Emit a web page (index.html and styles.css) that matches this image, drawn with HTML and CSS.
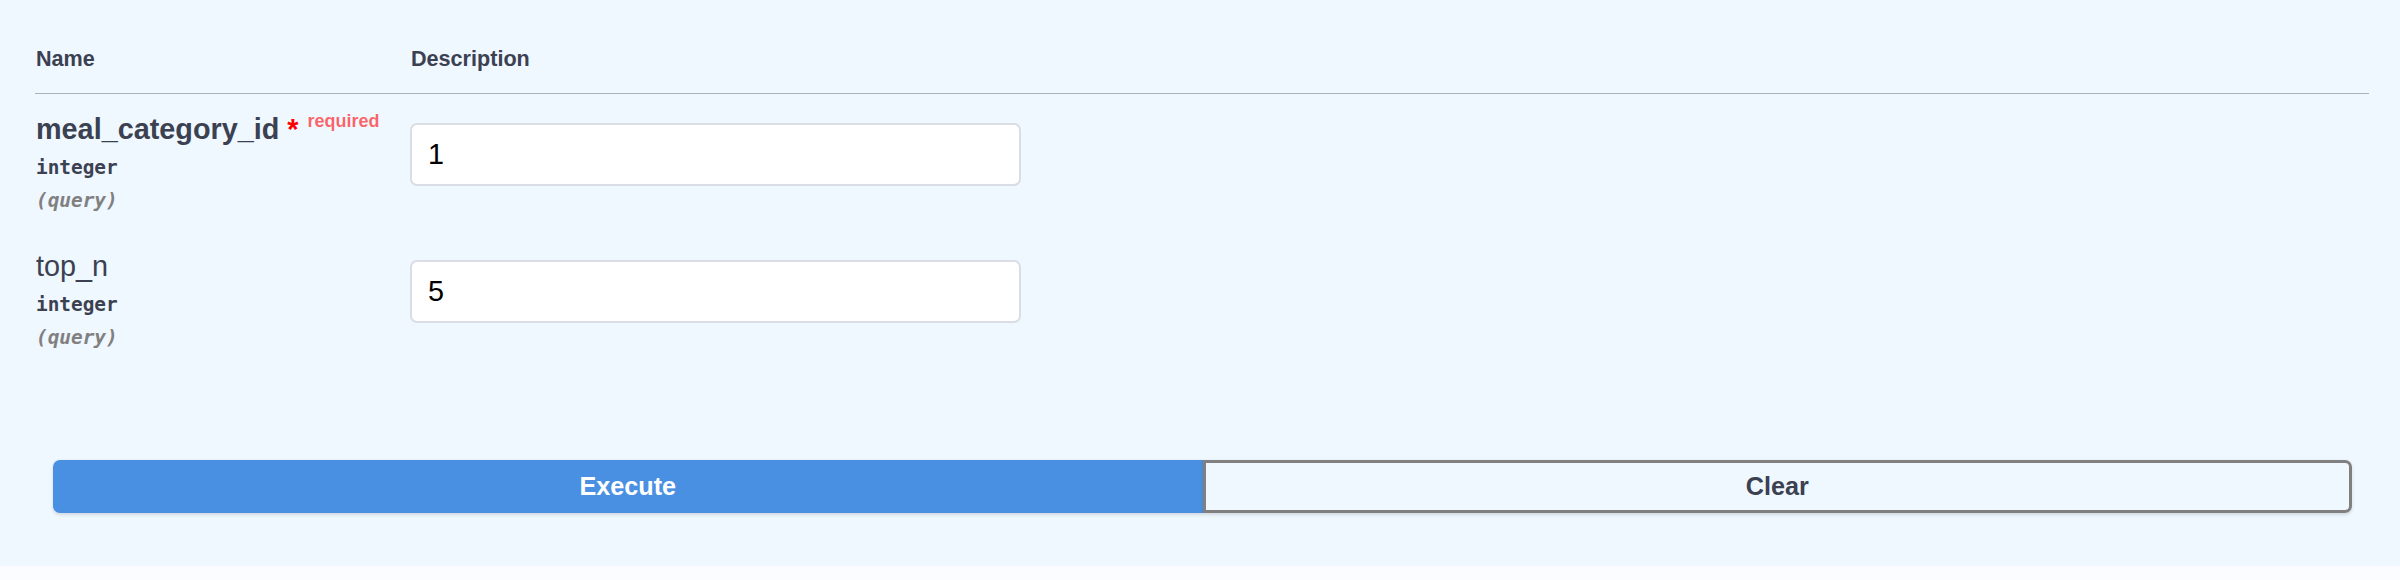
FILE: index.html
```html
<!DOCTYPE html>
<html lang="en">
<head>
<meta charset="utf-8">
<title>Parameters</title>
<link rel="stylesheet" href="styles.css">
</head>
<body>
<div class="opblock">
  <div class="params">
    <div class="thead">
      <div class="col-name">Name</div>
      <div class="col-desc">Description</div>
    </div>
    <div class="row">
      <div class="col-name">
        <div class="param-name required">meal_category_id<span class="star">&nbsp;*</span><span class="req">required</span></div>
        <div class="param-type">integer</div>
        <div class="param-in">(query)</div>
      </div>
      <div class="col-desc">
        <input class="param-input" type="text" value="1">
      </div>
    </div>
    <div class="row">
      <div class="col-name">
        <div class="param-name">top_n</div>
        <div class="param-type">integer</div>
        <div class="param-in">(query)</div>
      </div>
      <div class="col-desc">
        <input class="param-input" type="text" value="5">
      </div>
    </div>
  </div>
  <div class="btn-group">
    <button class="btn execute" type="button">Execute</button>
    <button class="btn clear" type="button">Clear</button>
  </div>
</div>
</body>
</html>
```

FILE: styles.css
```css
html, body {
  margin: 0;
  padding: 0;
}
body {
  background: #fafcff;
  font-family: "Liberation Sans", Arial, sans-serif;
  color: #3b4151;
}
.opblock {
  background: #eff7ff;
  height: 566px;
  box-sizing: border-box;
  padding-top: 45.5px;
}
.params {
  margin: 0 31px 0 35px;
}
.thead {
  display: grid;
  grid-template-columns: 375px 1fr;
  font-size: 21.6px;
  font-weight: 700;
  line-height: 26px;
  padding: 0 0 21.5px 1px;
  border-bottom: 1px solid #aab2be;
}
.row {
  display: grid;
  grid-template-columns: 375px 1fr;
  padding: 18px 0 18.2px 1px;
}
.param-name {
  font-size: 28.8px;
  line-height: 34px;
  font-weight: 400;
  white-space: nowrap;
}
.param-name.required {
  font-weight: 700;
}
.star {
  color: #ff0000;
}
.req {
  font-size: 18px;
  line-height: 0;
  color: rgba(255, 0, 0, 0.6);
  padding-left: 9px;
  vertical-align: 11.7px;
}
.param-type {
  font-family: "DejaVu Sans Mono", "Liberation Mono", monospace;
  font-weight: 700;
  font-size: 19.4px;
  line-height: 24px;
  padding: 9.8px 0 9px;
}
.param-in {
  font-family: "DejaVu Sans Mono", "Liberation Mono", monospace;
  font-weight: 700;
  font-style: italic;
  font-size: 19.4px;
  line-height: 24px;
  color: #808080;
}
.col-desc {
  min-width: 0;
}
.param-input {
  display: block;
  box-sizing: border-box;
  width: 611px;
  height: 63px;
  margin: 10.7px 0 0 -1px;
  padding: 0 16px;
  border: 2px solid #dadee4;
  border-radius: 7px;
  background: #fff;
  font-family: "Liberation Sans", Arial, sans-serif;
  font-size: 28.8px;
  color: #000;
  outline: none;
}
.btn-group {
  display: flex;
  margin: 92.4px 48px 0 53px;
}
.btn {
  flex: 1 1 0;
  height: 52.4px;
  box-sizing: border-box;
  font-family: "Liberation Sans", Arial, sans-serif;
  font-size: 25.2px;
  font-weight: 700;
  box-shadow: 0 1.8px 3.6px rgba(0, 0, 0, 0.12);
  padding: 0;
  cursor: pointer;
}
.execute {
  background: #4990e2;
  border: 3px solid #4990e2;
  color: #fff;
  border-radius: 7px 0 0 7px;
}
.clear {
  background: transparent;
  border: 3px solid #808080;
  color: #3b4151;
  border-radius: 0 7px 7px 0;
}
```
